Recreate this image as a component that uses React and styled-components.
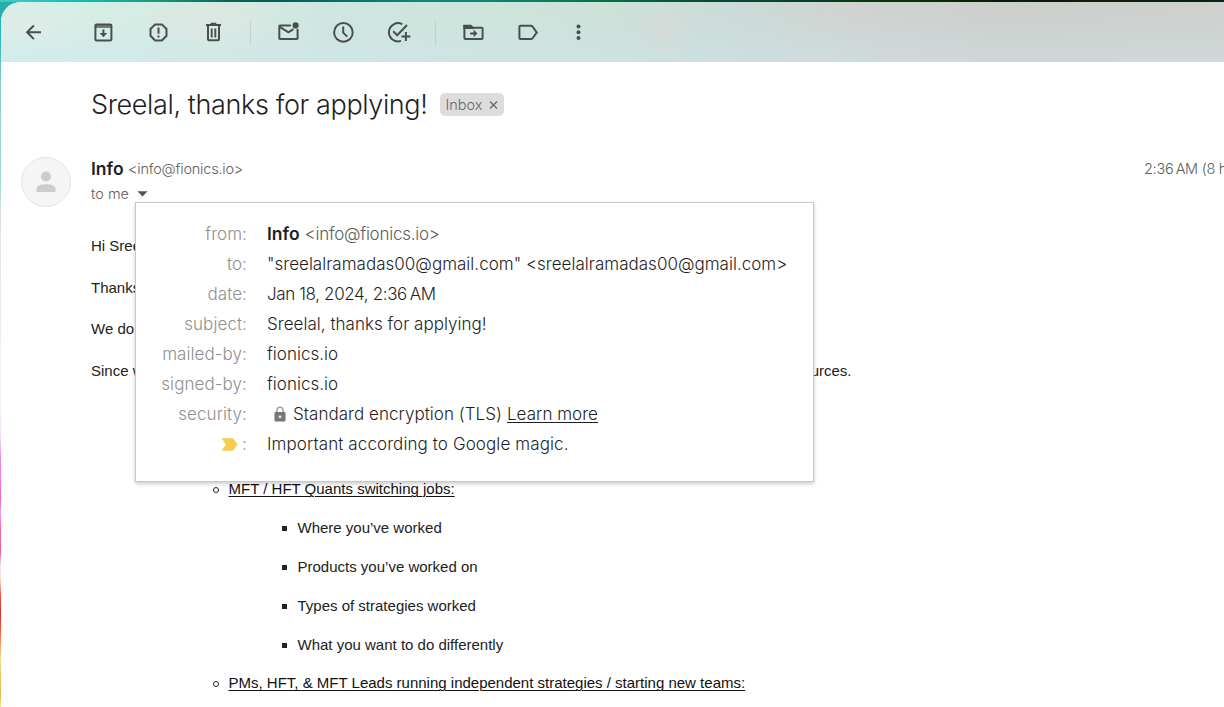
import React from 'react';
import styled, { createGlobalStyle } from 'styled-components';

const GlobalStyle = createGlobalStyle`
  body { margin: 0; overflow: hidden; }
  *, *::before, *::after { box-sizing: border-box; }
`;

const ui = '"Inter", "Liberation Sans", sans-serif';

const Desktop = styled.div`
  display: flex;
  width: 1224px;
  height: 707px;
  padding: 2px 0 0 1px;
  overflow: hidden;
  background:
    linear-gradient(90deg, #48c8c4 0, #10bfb0 80px, #1a9c7c 150px, #056352 235px, #065e50 280px, #0a8a78 420px,
      #0a8468 520px, #04724a 600px, #0a4a3c 700px, #0a3c20 830px, #0a3608 880px, #0a1c08 1000px, #101c08 1120px,
      #04241c 1224px) 0 0 / 100% 2px no-repeat,
    linear-gradient(180deg, #20b0ac 0, #30b8b4 40px, #8ccccc 85px, #90dcd8 150px, #a8dcd8 190px, #dce0e2 215px,
      #ececec 300px, #f2f2f2 400px, #f4e0fa 435px, #ee82f8 460px, #f07af0 478px, #f860a8 498px, #f0a0f8 512px,
      #f868a0 528px, #f85898 552px, #f4e4f8 566px, #f8dcc8 580px, #f85040 596px, #d83028 614px, #f85840 630px,
      #f8b068 648px, #f4e090 660px, #f8c060 676px, #f8b050 695px, #f0e890 707px);
`;

const MailWindow = styled.main`
  display: flex;
  flex-direction: column;
  flex: 1;
  min-width: 0;
  border-radius: 20px 0 0 0;
  overflow: hidden;
  font-family: ${ui};
  font-weight: 300;
  color: #1f1f1f;
`;

const Toolbar = styled.nav`
  display: flex;
  align-items: center;
  flex: none;
  height: 60px;
  padding-left: 4.5px;
  background:
    radial-gradient(ellipse 32px 30px at 662px 26px, rgba(216, 217, 215, 0.7), transparent),
    radial-gradient(ellipse 80px 34px at 205px 18px, rgba(226, 230, 225, 0.75), transparent),
    radial-gradient(ellipse 80px 30px at 12px 24px, rgba(228, 235, 231, 0.8), transparent),
    linear-gradient(180deg, transparent 20%, rgba(206, 228, 240, 0.4)),
    linear-gradient(90deg, #d2f0ec 0, #d5efe6 80px, #d3e9e1 250px, #cde6df 350px, #cde5dd 450px, #cde2d9 600px,
      #cbdbd7 730px, #cfd4d1 850px, #cdcfcb 1000px, #ced1cd 1224px),
    #fff;
`;

const ToolButton = styled.button`
  display: grid;
  place-items: center;
  width: ${(p) => p.$width || 55}px;
  height: 50px;
  margin: 0 ${(p) => p.$gap || 0}px 0 0;
  padding: 0;
  border: 0;
  background: none;
  color: #4a4f4d;
`;

const Divider = styled.span`
  width: 1px;
  height: 25px;
  margin: 0 ${(p) => p.$after}px 0 9px;
  background: rgba(100, 121, 143, 0.18);
`;

const Conversation = styled.section`
  flex: 1;
  padding-left: 90px;
  background: #fff;
`;

const SubjectRow = styled.header`
  display: flex;
  align-items: center;
  gap: 12px;
  height: 44px;
  margin-top: 21px;
`;

const Subject = styled.h1`
  width: 337px;
  margin: 0;
  font-size: 27px;
  font-weight: 300;
  line-height: 36px;
  letter-spacing: -0.38px;
  white-space: nowrap;
`;

const LabelChip = styled.span`
  display: flex;
  align-items: center;
  justify-content: space-between;
  width: 64px;
  height: 23px;
  margin-bottom: 1px;
  padding: 0 6px 1px 5.5px;
  border-radius: 5px;
  background: #ddd;
  color: #666;
  font-size: 14.5px;
`;

const SenderRow = styled.div`
  display: flex;
  align-items: flex-start;
  margin: 29px 0 0 -70px;
`;

const Avatar = styled.span`
  display: grid;
  place-items: center;
  flex: none;
  width: 50px;
  height: 50px;
  margin: 1px 20px 0 0;
  border: 1px solid #e4e4e4;
  border-radius: 50%;
  background: #f5f5f5;
`;

const SenderInfo = styled.div`
  flex: 1;
`;

const SenderLine = styled.div`
  display: flex;
  align-items: center;
  gap: ${(p) => p.$gap}px;
  height: 25px;
  color: #5e5e5e;
  font-size: 14.5px;
  line-height: 25px;
  white-space: nowrap;
`;

const Name = styled.strong`
  color: #1f1f1f;
  font-size: 17.5px;
  font-weight: 600;
`;

const Address = styled.span`
  color: #5e5e5e;
  letter-spacing: ${(p) => p.$tracking}px;
`;

const SentTime = styled.time`
  flex: none;
  width: 80px;
  overflow: hidden;
  color: #5e5e5e;
  font-size: 14.5px;
  line-height: 25px;
  letter-spacing: -0.3px;
  white-space: nowrap;
`;

const ToMe = styled.span`
  width: 38px;
`;

const DetailsAnchor = styled.span`
  position: relative;
  display: grid;
  place-items: center;
  width: 11px;
  height: 25px;
  padding-top: 1px;
`;

const DetailsCard = styled.div`
  position: absolute;
  top: 21px;
  left: -2px;
  z-index: 2;
  width: 679px;
  height: 280px;
  padding: 16px 0 0 20px;
  border: 1px solid #c6c9c9;
  background: #fff;
  box-shadow: 0 2px 4px rgba(0, 0, 0, 0.2);
  color: #1f1f1f;
  font-size: 17px;
`;

const DetailRow = styled.div`
  display: grid;
  grid-template-columns: 91px auto;
  column-gap: 20px;
  height: 30px;
  line-height: 30px;
`;

const DetailLabel = styled.span`
  display: flex;
  align-items: center;
  justify-content: flex-end;
  gap: 4px;
  color: #909090;
  letter-spacing: 0.08px;
`;

const DetailValue = styled.span`
  display: flex;
  align-items: center;
  gap: 5px;
  letter-spacing: ${(p) => p.$tracking || 0}px;
`;

const SecurityIcon = styled.span`
  display: grid;
  place-items: center;
  width: 21px;
  height: 20px;
  padding-left: 4px;
`;

const LearnMore = styled.a`
  text-decoration: underline;
  text-decoration-thickness: 1px;
  text-underline-offset: 2px;
`;

const MessageBody = styled.article`
  padding-top: 29px;
  color: #222;
  font: 400 15px/20.7px "Liberation Sans", Arial, sans-serif;
`;

const Paragraph = styled.p`
  display: flex;
  justify-content: space-between;
  width: 760.5px;
  margin: 0 0 20.8px;
`;

const TopicList = styled.ul`
  margin: 98px 0 0;
  padding: 0 0 0 121.5px;
  list-style: none;
`;

const Topic = styled.li`
  display: grid;
  grid-template-columns: 16px auto;
  align-items: center;
  margin-bottom: 17.5px;
`;

const Point = styled.li`
  display: grid;
  grid-template-columns: 16px auto;
  align-items: center;
  height: 21px;
  margin-bottom: 18px;
`;

const PointList = styled.ul`
  margin: 0;
  padding: 0 0 0 69px;
  list-style: none;
`;

const RingBullet = styled.span`
  width: 6px;
  height: 6px;
  border: 1px solid #222;
  border-radius: 50%;
`;

const SquareBullet = styled.span`
  width: 5px;
  height: 5px;
  margin-top: 2px;
  background: #222;
`;

const TopicTitle = styled.u`
  color: #111;
  text-decoration-thickness: 1px;
  text-underline-offset: 1.5px;
`;

const Glyph = ({ children, width = 2 }) => (
  <svg width="26" height="26" viewBox="-13 -13 26 26" fill="none" stroke="currentColor" strokeWidth={width}>
    {children}
  </svg>
);

const BackIcon = () => (
  <Glyph><path d="M8 .3H-5.7M.9 -6.5L-5.9 .3L.9 7.1" /></Glyph>
);
const ArchiveIcon = () => (
  <Glyph>
    <rect x="-7.6" y="-7.6" width="16" height="16" rx="1.2" />
    <path d="M-7.6 -5.6H8.4" strokeWidth="3" opacity=".7" />
    <path d="M.4 -2.6V1.4" />
    <path d="M-3.4 1.1H4.2L.4 5.2Z" fill="currentColor" stroke="none" />
  </Glyph>
);
const SpamIcon = () => (
  <Glyph>
    <path transform="translate(.5 .4)" d="M-3.4 -8H3.4L8 -3.4V3.4L3.4 8H-3.4L-8 3.4V-3.4Z" />
    <path d="M.5 -4.6V1.7M.5 3.5V5.5" />
  </Glyph>
);
const TrashIcon = () => (
  <Glyph>
    <path d="M-7 -7.1H8M-2.3 -8.2H3.3" />
    <path d="M-5 -6.5V7.3Q-5 8.3 -4 8.3H5Q6 8.3 6 7.3V-6.5" />
    <path d="M-1.3 -3.6V5.4M2.3 -3.6V5.4" strokeWidth="1.9" />
  </Glyph>
);
const UnreadIcon = () => (
  <Glyph>
    <path d="M2.8 -6.4H-8Q-8.7 -6.4 -8.7 -5.6V6.2Q-8.7 7 -8 7H8.8Q9.6 7 9.6 6.2V-3" />
    <path d="M-8.3 -5.1L.4 .4L5.4 -2.8" />
    <circle cx="7.6" cy="-6.6" r="3.1" fill="currentColor" stroke="none" />
  </Glyph>
);
const SnoozeIcon = () => (
  <Glyph><circle cx=".4" cy=".4" r="9.3" /><path d="M.2 -5.4V.6L4.2 4.6" /></Glyph>
);
const AddTaskIcon = () => (
  <Glyph>
    <path d="M4.4 -7.7A9.1 9.1 0 1 0 3 8.9" />
    <path d="M-4.8 -.8L-.8 3.2L9 -7M3.4 4.5H12.4M7.9 .1V9.1" />
  </Glyph>
);
const MoveIcon = () => (
  <Glyph>
    <path d="M-8.6 -6.2H-2.3L-.4 -4.3H8.6Q9.6 -4.3 9.6 -3.3V6Q9.6 7 8.6 7H-7.6Q-8.6 7 -8.6 6V-6.2Z" />
    <path d="M-8.6 -6.1H-2.4L-.6 -4.1H-8.6Z" fill="currentColor" />
    <path d="M-2.9 1.4H2.2" />
    <path d="M.6 -2.4L4.4 1.4L.6 5.2Z" fill="currentColor" stroke="none" />
  </Glyph>
);
const LabelIcon = () => (
  <Glyph><path transform="translate(.4 .2)" d="M-8 -6.4H2.9Q3.6 -6.4 4 -5.9L8.4 .2L4 6.3Q3.6 6.8 2.9 6.8H-8Q-9 6.8 -9 5.8V-5.4Q-9 -6.4 -8 -6.4Z" /></Glyph>
);
const MoreIcon = () => (
  <Glyph>
    {[-5.5, 0.3, 6.1].map((y) => <circle key={y} cx=".5" cy={y} r="2" fill="currentColor" stroke="none" />)}
  </Glyph>
);

const PersonIcon = () => (
  <svg width="20" height="22" viewBox="0 0 20 22" fill="#ccc">
    <circle cx="10" cy="5.5" r="5" />
    <path d="M.5 21V17.5C.5 14.6 5.5 13.2 10 13.2S19.5 14.6 19.5 17.5V21Z" />
  </svg>
);
const CaretIcon = () => (
  <svg width="11" height="6" viewBox="0 0 11 6" fill="#555"><path d="M.4 .3H10.6L5.5 5.4Z" /></svg>
);
const CloseIcon = () => (
  <svg width="9" height="9" viewBox="0 0 9 9" stroke="#666" strokeWidth="1.3"><path d="M1 1.5L8 8.5M8 1.5L1 8.5" /></svg>
);
const LockIcon = () => (
  <svg width="12" height="16" viewBox="0 0 12 16">
    <path d="M3 7V4.4A3 3.2 0 0 1 9 4.4V7" fill="none" stroke="#a4a4a4" strokeWidth="1.6" />
    <rect x=".5" y="6" width="11" height="9.4" rx="1" fill="#777" />
    <circle cx="6" cy="10.7" r="1.5" fill="#ddd" />
  </svg>
);
const ImportantIcon = () => (
  <svg width="17" height="13" viewBox="0 0 17 13" fill="#f7cb4d"><path d="M.5 .2H11.2Q12 .2 12.5 .9L16.5 6.5L12.5 12.1Q12 12.8 11.2 12.8H.5L4.8 6.5Z" /></svg>
);

const Tool = ({ icon: Icon, label, width, gap }) => (
  <ToolButton aria-label={label} $width={width} $gap={gap}><Icon /></ToolButton>
);

const Detail = ({ label, tracking, children }) => (
  <DetailRow>
    <DetailLabel>{label}</DetailLabel>
    <DetailValue $tracking={tracking}>{children}</DetailValue>
  </DetailRow>
);

const points = ['Where you’ve worked', 'Products you’ve worked on', 'Types of strategies worked', 'What you want to do differently'];

export default function App() {
  return (
    <Desktop>
      <GlobalStyle />
      <MailWindow>
        <Toolbar>
          <Tool icon={BackIcon} label="Back" gap={15} />
          <Tool icon={ArchiveIcon} label="Archive" />
          <Tool icon={SpamIcon} label="Report spam" />
          <Tool icon={TrashIcon} label="Delete" />
          <Divider $after={10} />
          <Tool icon={UnreadIcon} label="Mark as unread" />
          <Tool icon={SnoozeIcon} label="Snooze" />
          <Tool icon={AddTaskIcon} label="Add to tasks" />
          <Divider $after={10} />
          <Tool icon={MoveIcon} label="Move to" />
          <Tool icon={LabelIcon} label="Labels" />
          <Tool icon={MoreIcon} label="More" width={45} />
        </Toolbar>
        <Conversation>
          <SubjectRow>
            <Subject>Sreelal, thanks for applying!</Subject>
            <LabelChip>Inbox<CloseIcon /></LabelChip>
          </SubjectRow>
          <SenderRow>
            <Avatar><PersonIcon /></Avatar>
            <SenderInfo>
              <SenderLine $gap={4.5}>
                <Name>Info</Name>
                <Address $tracking={-0.22}>&lt;info@fionics.io&gt;</Address>
              </SenderLine>
              <SenderLine $gap={8}>
                <ToMe>to me</ToMe>
                <DetailsAnchor>
                  <CaretIcon />
                  <DetailsCard>
                    <Detail label="from:">
                      <Name>Info</Name>
                      <Address $tracking={-0.24}>&lt;info@fionics.io&gt;</Address>
                    </Detail>
                    <Detail label="to:" tracking={0.02}>"sreelalramadas00@gmail.com" &lt;sreelalramadas00@gmail.com&gt;</Detail>
                    <Detail label="date:" tracking={-0.37}>Jan 18, 2024, 2:36{'\u202f'}AM</Detail>
                    <Detail label="subject:" tracking={0.03}>Sreelal, thanks for applying!</Detail>
                    <Detail label="mailed-by:">fionics.io</Detail>
                    <Detail label="signed-by:">fionics.io</Detail>
                    <Detail label="security:" tracking={0.04}>
                      <SecurityIcon><LockIcon /></SecurityIcon>
                      <span>Standard encryption (TLS)</span>
                      <LearnMore>Learn more</LearnMore>
                    </Detail>
                    <Detail label={<><ImportantIcon />:</>} tracking={0.1}>Important according to Google magic.</Detail>
                  </DetailsCard>
                </DetailsAnchor>
              </SenderLine>
            </SenderInfo>
            <SentTime>2:36{'\u202f'}AM (8 hours ago)</SentTime>
          </SenderRow>
          <MessageBody>
            <Paragraph>Hi Sreelal,</Paragraph>
            <Paragraph>Thanks</Paragraph>
            <Paragraph>We do</Paragraph>
            <Paragraph><span>Since we</span><span>resources.</span></Paragraph>
            <TopicList>
              <Topic><RingBullet /><TopicTitle>MFT / HFT Quants switching jobs:</TopicTitle></Topic>
              <PointList>
                {points.map((text) => <Point key={text}><SquareBullet />{text}</Point>)}
              </PointList>
              <Topic><RingBullet /><TopicTitle>PMs, HFT, &amp; MFT Leads running independent strategies / starting new teams:</TopicTitle></Topic>
            </TopicList>
          </MessageBody>
        </Conversation>
      </MailWindow>
    </Desktop>
  );
}
